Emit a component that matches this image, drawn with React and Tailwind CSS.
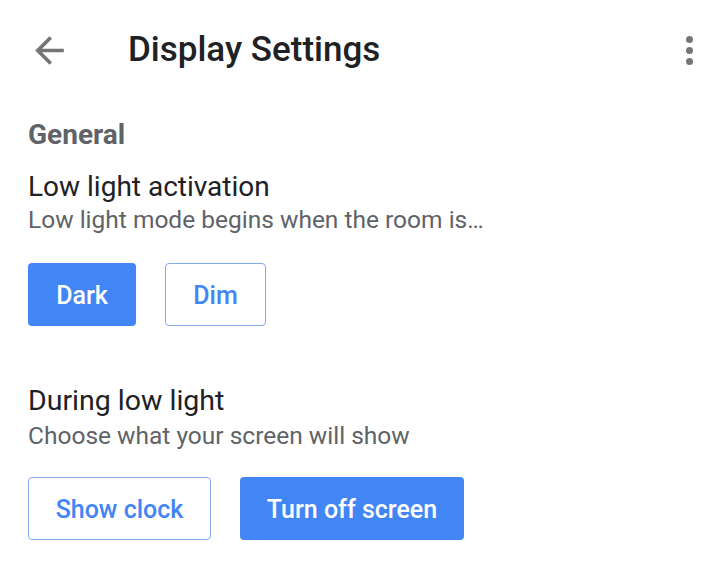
export default function App() {
  return (
    <div className="w-[728px] h-[578px] bg-white overflow-hidden" style={{ fontFamily: "Roboto, 'Noto Sans', sans-serif" }}>
      <div className="flex items-center h-[100px] pl-[28px] pr-[35px]">
        <svg width="43" height="43" viewBox="0 0 24 24" className="shrink-0">
          <path d="M20 11H7.83l5.59-5.59L12 4l-8 8 8 8 1.41-1.41L7.83 13H20v-2z" fill="#757575" />
        </svg>
        <div className="ml-[57px] text-[35px] leading-[40px] font-medium text-[#202124]">Display Settings</div>
        <div className="ml-auto flex flex-col gap-[4px] items-center">
          <span className="w-[7px] h-[7px] rounded-full bg-[#757575]" />
          <span className="w-[7px] h-[7px] rounded-full bg-[#757575]" />
          <span className="w-[7px] h-[7px] rounded-full bg-[#757575]" />
        </div>
      </div>
      <div className="pl-[28px]">
        <div className="mt-[19px] text-[28px] font-bold text-[#5f6368] leading-[32px]">General</div>
        <div className="mt-[20px] text-[28px] text-[#202124] leading-[32px]">Low light activation</div>
        <div className="mt-[1px] text-[24.5px] text-[#5f6368] leading-[32px]">Low light mode begins when the room is…</div>
        <div className="mt-[27px] flex gap-[29px]">
          <button className="w-[108px] h-[63px] rounded-[4px] bg-[#4285f4] text-white text-[25px] font-medium pt-[2px]">Dark</button>
          <button className="w-[101px] h-[63px] rounded-[4px] border border-[#82abea] text-[#4285f4] text-[25px] font-medium pt-[2px]">Dim</button>
        </div>
        <div className="mt-[59px] text-[28.5px] text-[#202124] leading-[32px]">During low light</div>
        <div className="mt-[3px] text-[24.5px] text-[#5f6368] leading-[32px]">Choose what your screen will show</div>
        <div className="mt-[25px] flex gap-[29px]">
          <button className="w-[183px] h-[63px] rounded-[4px] border border-[#82abea] text-[#4285f4] text-[25px] font-medium pt-[2px]">Show clock</button>
          <button className="w-[224px] h-[63px] rounded-[4px] bg-[#4285f4] text-white text-[25px] font-medium pt-[2px]">Turn off screen</button>
        </div>
      </div>
    </div>
  );
}
